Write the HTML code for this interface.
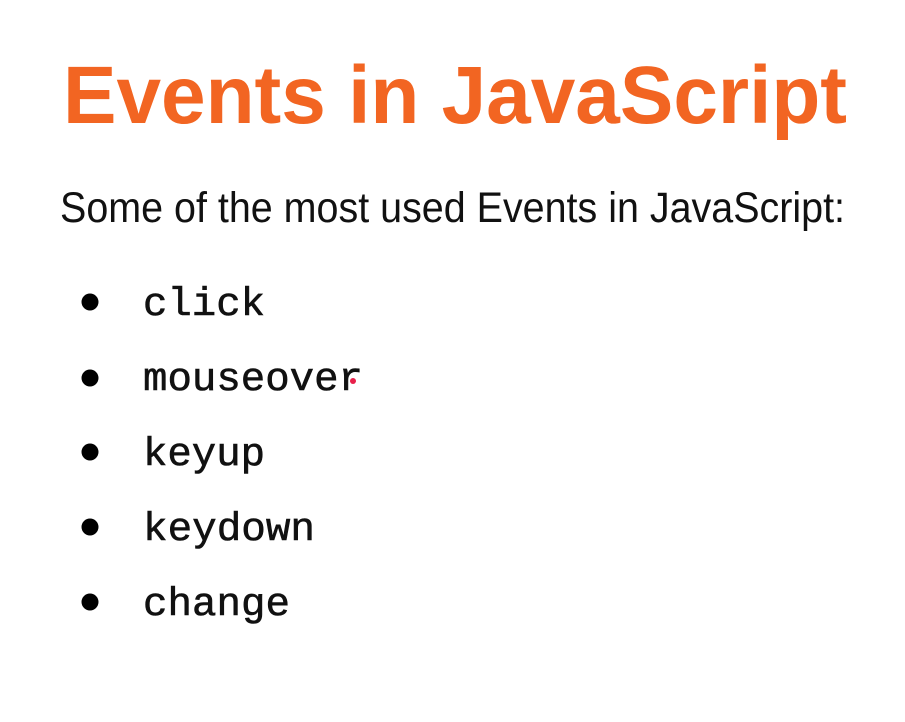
<!DOCTYPE html>
<html><head><meta charset="utf-8"><style>
html,body{margin:0;padding:0;background:#fff;width:905px;height:722px;overflow:hidden}
svg{display:block}
</style></head><body>
<svg width="905" height="722" xmlns="http://www.w3.org/2000/svg">
<rect width="905" height="722" fill="#fff"/>
<text x="63" y="123" font-family="Liberation Sans, sans-serif" font-weight="bold" font-size="82" fill="#f26522" textLength="784" lengthAdjust="spacingAndGlyphs">Events in JavaScript</text>
<text x="60" y="222" font-family="Liberation Sans, sans-serif" font-size="43" fill="#111" textLength="785" lengthAdjust="spacingAndGlyphs">Some of the most used Events in JavaScript:</text>
<g fill="#000">
<circle cx="90" cy="302" r="8.5"/>
<circle cx="90" cy="378" r="8.5"/>
<circle cx="90" cy="452" r="8.5"/>
<circle cx="90" cy="527" r="8.5"/>
<circle cx="90" cy="602" r="8.5"/>
</g>
<g font-family="Liberation Mono, monospace" font-size="40" fill="#111" stroke="#111" stroke-width="0.6">
<text x="143" y="315" textLength="122" lengthAdjust="spacingAndGlyphs">click</text>
<text x="143" y="390" textLength="220" lengthAdjust="spacingAndGlyphs">mouseover</text>
<text x="143" y="465" textLength="122" lengthAdjust="spacingAndGlyphs">keyup</text>
<text x="143" y="540" textLength="172" lengthAdjust="spacingAndGlyphs">keydown</text>
<text x="143" y="615" textLength="147" lengthAdjust="spacingAndGlyphs">change</text>
</g>
<circle cx="353" cy="381" r="3" fill="#e8204a"/>
</svg>
</body></html>
